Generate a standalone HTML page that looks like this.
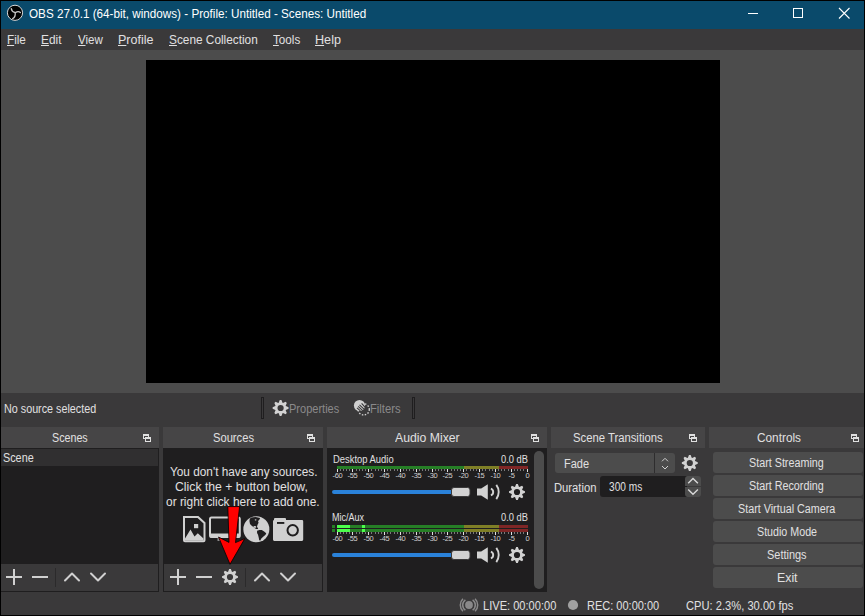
<!DOCTYPE html>
<html><head><meta charset="utf-8"><style>
*{box-sizing:border-box;margin:0;padding:0}
html,body{width:865px;height:616px;overflow:hidden;background:#3a393a}
body{position:relative;font-family:"Liberation Sans",sans-serif}
.a{position:absolute}
.t{position:absolute;white-space:pre;transform-origin:0 0}
u{text-decoration:underline;text-underline-offset:1px;text-decoration-thickness:1px}
svg{position:absolute;overflow:visible}
.lab{position:absolute;width:30px;text-align:center;font-size:7.5px;line-height:8px;color:#d0d0d0;letter-spacing:-0.3px}
</style></head><body>
<!-- window border -->
<div class="a" style="left:0;top:0;width:865px;height:616px;background:#000"></div>
<!-- title bar -->
<div class="a" style="left:1px;top:1px;width:863px;height:28px;background:#0a4a6b"></div>
<!-- menu bar -->
<div class="a" style="left:1px;top:29px;width:863px;height:21px;background:#3a393a"></div>
<!-- preview -->
<div class="a" style="left:1px;top:50px;width:863px;height:343px;background:#4c4c4c"></div>
<div class="a" style="left:146px;top:60px;width:574px;height:323px;background:#000"></div>
<!-- context bar + docks area + status -->
<div class="a" style="left:1px;top:393px;width:863px;height:222px;background:#3a393a"></div>

<!-- dock titles -->
<div class="a" style="left:1px;top:427px;width:158px;height:21px;background:#464546"></div>
<div class="a" style="left:163px;top:427px;width:160px;height:21px;background:#464546"></div>
<div class="a" style="left:327px;top:427px;width:220px;height:21px;background:#464546"></div>
<div class="a" style="left:551px;top:427px;width:154px;height:21px;background:#464546"></div>
<div class="a" style="left:709px;top:427px;width:155px;height:21px;background:#464546"></div>

<!-- Scenes dock content -->
<div class="a" style="left:1px;top:448px;width:158px;height:144px;background:#1f1e1f"></div>
<div class="a" style="left:1px;top:449px;width:157px;height:17px;background:#302f30"></div>
<div class="a" style="left:1px;top:564px;width:157px;height:27px;background:#3a393a"></div>
<!-- Sources dock content -->
<div class="a" style="left:163px;top:448px;width:160px;height:144px;background:#1f1e1f"></div>
<div class="a" style="left:164px;top:564px;width:158px;height:27px;background:#3a393a"></div>
<!-- Mixer -->
<div class="a" style="left:327px;top:448px;width:220px;height:144px;background:#1f1e1f"></div>
<div class="a" style="left:534px;top:451px;width:10px;height:138px;background:#4c4c4c;border-radius:5px"></div>

<!-- Transitions -->
<div class="a" style="left:555px;top:453px;width:120px;height:20px;background:#4c4c4c;border-radius:3px"></div>
<div class="a" style="left:654px;top:453px;width:1px;height:20px;background:#2e2d2e"></div>
<div class="a" style="left:600px;top:476px;width:87px;height:21px;background:#1f1e1f;border-radius:3px 0 0 3px"></div>
<div class="a" style="left:685px;top:476px;width:16px;height:10px;background:#4c4c4c;border-radius:3px 3px 0 0"></div>
<div class="a" style="left:685px;top:487px;width:16px;height:10px;background:#4c4c4c;border-radius:0 0 3px 3px"></div>

<!-- Controls buttons -->
<div class="a" style="left:713px;top:452px;width:150px;height:21px;background:#4c4c4c;border-radius:3px"></div>
<div class="a" style="left:713px;top:475px;width:150px;height:21px;background:#4c4c4c;border-radius:3px"></div>
<div class="a" style="left:713px;top:498px;width:150px;height:21px;background:#4c4c4c;border-radius:3px"></div>
<div class="a" style="left:713px;top:521px;width:150px;height:21px;background:#4c4c4c;border-radius:3px"></div>
<div class="a" style="left:713px;top:544px;width:150px;height:21px;background:#4c4c4c;border-radius:3px"></div>
<div class="a" style="left:713px;top:567px;width:150px;height:21px;background:#4c4c4c;border-radius:3px"></div>

<!-- status bar bottom border -->
<div class="a" style="left:0;top:615px;width:865px;height:1px;background:#000"></div>

<svg width="865" height="616" viewBox="0 0 865 616" style="left:0;top:0">
<defs>
  <g id="gear">
    <path fill="#d2d2d2" fill-rule="evenodd" d="M-1.92,-5.26 L-0.84,-7.96 L0.84,-7.96 L1.92,-5.26 L2.37,-5.08 L5.03,-6.22 L6.22,-5.03 L5.08,-2.37 L5.26,-1.92 L7.96,-0.84 L7.96,0.84 L5.26,1.92 L5.08,2.37 L6.22,5.03 L5.03,6.22 L2.37,5.08 L1.92,5.26 L0.84,7.96 L-0.84,7.96 L-1.92,5.26 L-2.37,5.08 L-5.03,6.22 L-6.22,5.03 L-5.08,2.37 L-5.26,1.92 L-7.96,0.84 L-7.96,-0.84 L-5.26,-1.92 L-5.08,-2.37 L-6.22,-5.03 L-5.03,-6.22 L-2.37,-5.08 Z M0,-3.1 A3.1,3.1 0 1,0 0,3.1 A3.1,3.1 0 1,0 0,-3.1 Z"/>
  </g>
  <g id="undock" fill="none" stroke="#e0e0e0" stroke-width="1">
    <rect x="0.5" y="0.5" width="5" height="4"/>
    <path d="M0,1.5 h6"/>
    <rect x="2.5" y="3.5" width="5" height="4" fill="#464546"/>
    <path d="M2,4.5 h6"/>
  </g>
  <g id="spk" fill="#d2d2d2">
    <path d="M0,4.3 h4.2 L10.8,0 V15.6 L4.2,11.3 H0 Z"/>
    <path d="M13.9,4.4 A3.66,3.66 0 0,1 13.9,11.2" fill="none" stroke="#d2d2d2" stroke-width="1.9"/>
    <path d="M19.3,0.7 A11.7,11.7 0 0,1 19.3,14.9" fill="none" stroke="#d2d2d2" stroke-width="1.9"/>
  </g>
</defs>

<!-- OBS logo -->
<circle cx="15" cy="12.8" r="7.6" fill="#000" stroke="#d8d8d8" stroke-width="1"/>
<g fill="none" stroke="#c8c8c8" stroke-width="1.3" stroke-linecap="round">
  <path d="M11.3,8.6 Q11.6,11.6 14.8,12.4"/>
  <path d="M20.4,12.6 Q18.2,10.6 15.4,12.6"/>
  <path d="M12.6,18.6 Q15.6,17.2 15.2,13"/>
</g>
<!-- window controls -->
<path d="M748,13.5 h10" stroke="#fff" stroke-width="1"/>
<rect x="793.5" y="8.5" width="9" height="9" fill="none" stroke="#fff" stroke-width="1"/>
<path d="M839,8 L849.5,18.5 M849.5,8 L839,18.5" stroke="#fff" stroke-width="1.1"/>
<!-- menu underlines handled by text -->

<!-- context bar separators -->
<rect x="261.5" y="397.5" width="2" height="21" fill="none" stroke="#1f1e1f" stroke-width="1"/>
<rect x="412.5" y="397.5" width="2" height="21" fill="none" stroke="#1f1e1f" stroke-width="1"/>
<use href="#gear" transform="translate(280.6,408)"/>
<!-- filters icon -->
<g>
  <circle cx="359.5" cy="405.5" r="5.6" fill="#d0d0d0"/>
  <circle cx="363.7" cy="409.4" r="5.6" fill="none" stroke="#d0d0d0" stroke-width="1.4" stroke-dasharray="1.5 1.5"/>
  <g stroke="#3a393a" stroke-width="1.1" fill="none">
    <path d="M361.6,403.3 L365.2,407.4 M359.5,404.9 L364,409.2 M358.2,406.4 L362.7,410.6 M357,407.8 L360.4,410.9"/>
  </g>
</g>

<!-- undock icons -->
<use href="#undock" transform="translate(143,434)"/>
<use href="#undock" transform="translate(307,434)"/>
<use href="#undock" transform="translate(531,434)"/>
<use href="#undock" transform="translate(689,434)"/>
<use href="#undock" transform="translate(851,434)"/>

<!-- scenes toolbar -->
<g stroke="#d0d0d0" stroke-width="2" fill="none">
  <path d="M6,577 h16 M14,569 v16"/>
  <path d="M32,577 h16"/>
  <path d="M65,580.5 L72,573.5 L79,580.5" stroke-linecap="round" stroke-linejoin="round"/>
  <path d="M91,573.5 L98,580.5 L105,573.5" stroke-linecap="round" stroke-linejoin="round"/>
  <path d="M170,577 h16 M178,569 v16"/>
  <path d="M196,577 h16"/>
  <path d="M255,580.5 L262,573.5 L269,580.5" stroke-linecap="round" stroke-linejoin="round"/>
  <path d="M281,573.5 L288,580.5 L295,573.5" stroke-linecap="round" stroke-linejoin="round"/>
</g>
<path d="M55.5,568 v19 M245.5,568 v19" stroke="#2b2a2b" stroke-width="1"/>
<use href="#gear" transform="translate(230,577)"/>
<!-- toolbar frame borders -->
<path d="M158.5,448 V591.5 H1" fill="none" stroke="#1f1e1f" stroke-width="1"/>
<rect x="163.5" y="448.5" width="159" height="143" fill="none" stroke="#1f1e1f" stroke-width="1"/>

<!-- source icons -->
<g>
  <path d="M184,517 H198 L204.5,523 V540.3 Q204.5,541.3 203.5,541.3 H185 Q184,541.3 184,540.3 Z" fill="none" stroke="#d0d0d0" stroke-width="2"/>
  <rect x="194" y="524" width="4.2" height="4.2" fill="#d0d0d0"/>
  <path d="M185,538.5 L190.5,529.5 L194.5,536.5 L197.8,533.2 L203.5,538.5 V540.5 H185 Z" fill="#d0d0d0"/>
</g>
<g>
  <rect x="210" y="517.4" width="29.8" height="19.6" rx="1.5" fill="none" stroke="#d0d0d0" stroke-width="2"/>
  <rect x="210" y="533.5" width="29.8" height="4" fill="#d0d0d0"/>
  <path d="M217.5,538 h2.5 v3 h-2.5 z" fill="#8a8a8a"/>
</g>
<g>
  <circle cx="256.35" cy="529.25" r="13" fill="#d0d0d0"/>
  <path d="M249.77,518.77 L251.42,517.59 L255.65,516.98 L260.13,517.92 L259.18,519.94 L258.0,521.12 L258.57,522.77 L257.54,524.65 L256.97,526.77 L258.24,528.65 L257.54,529.12 L256.12,529.12 L254.95,528.18 L253.3,527.0 L251.42,525.59 L250.0,523.95 L249.44,521.12 Z" fill="#1f1e1f"/>
  <ellipse cx="254.8" cy="526.9" rx="1.5" ry="0.9" fill="#d0d0d0"/>
  <circle cx="255.6" cy="519.8" r="0.9" fill="#9a9a9a"/>
  <path d="M257.07,530.77 L259.42,529.97 L261.77,530.07 L264.13,531.48 L266.25,533.13 L265.54,534.77 L263.19,536.66 L261.3,538.54 L260.13,540.66 L259.18,539.95 L258.71,537.6 L258.01,534.77 L257.07,532.89 Z" fill="#1f1e1f"/>
</g>
<g>
  <path d="M275,518 H285 Q286,518 286,519 V520 H302 Q303.2,520 303.2,521.2 V539.6 Q303.2,540.9 302,540.9 H274.2 Q273,540.9 273,539.6 V521.2 Q273,520 274.2,520 H274 V519 Q274,518 275,518 Z" fill="#d0d0d0"/>
  <rect x="277" y="522" width="7.3" height="1.9" fill="#1f1e1f"/>
  <circle cx="292.7" cy="530.3" r="5.2" fill="none" stroke="#1f1e1f" stroke-width="2"/>
</g>
<!-- red arrow -->
<path d="M227.8,506.6 L239.6,506.6 L235.5,542.6 L244.8,538.6 L230,564.3 L218.5,537 L229,542.4 Z" fill="#ff0000" stroke="#000" stroke-width="0.8" stroke-linejoin="miter"/>

<!-- mixer: meters -->
<g id="meters">
  <rect x="337" y="466" width="127" height="3" fill="#267f26"/>
  <rect x="464" y="466" width="35" height="3" fill="#7f7f26"/>
  <rect x="499" y="466" width="29" height="3" fill="#7f2626"/>

  <rect x="337" y="525" width="127" height="3" fill="#267f26"/>
  <rect x="464" y="525" width="35" height="3" fill="#7f7f26"/>
  <rect x="499" y="525" width="29" height="3" fill="#7f2626"/>
  <rect x="337" y="529" width="127" height="3" fill="#267f26"/>
  <rect x="464" y="529" width="35" height="3" fill="#7f7f26"/>
  <rect x="499" y="529" width="29" height="3" fill="#7f2626"/>
  <rect x="337" y="525" width="13" height="3" fill="#4cff4c"/>
  <rect x="337" y="529" width="13" height="3" fill="#4cff4c"/>
  <rect x="362" y="525" width="3" height="3" fill="#4cff4c"/>
  <rect x="362" y="529" width="3" height="3" fill="#4cff4c"/>
  <rect x="332" y="525" width="3" height="3" fill="#267f26"/>
  <rect x="332" y="529" width="3" height="3" fill="#267f26"/>
</g>
<g id="ticks1"><rect x="337" y="469" width="1" height="3" fill="#e1e0e1"/><rect x="340" y="469" width="1" height="2" fill="#7a797a"/><rect x="343" y="469" width="1" height="2" fill="#7a797a"/><rect x="346" y="469" width="1" height="2" fill="#7a797a"/><rect x="349" y="469" width="1" height="2" fill="#7a797a"/><rect x="352" y="469" width="1" height="3" fill="#e1e0e1"/><rect x="356" y="469" width="1" height="2" fill="#7a797a"/><rect x="359" y="469" width="1" height="2" fill="#7a797a"/><rect x="362" y="469" width="1" height="2" fill="#7a797a"/><rect x="365" y="469" width="1" height="2" fill="#7a797a"/><rect x="368" y="469" width="1" height="3" fill="#e1e0e1"/><rect x="371" y="469" width="1" height="2" fill="#7a797a"/><rect x="375" y="469" width="1" height="2" fill="#7a797a"/><rect x="378" y="469" width="1" height="2" fill="#7a797a"/><rect x="381" y="469" width="1" height="2" fill="#7a797a"/><rect x="384" y="469" width="1" height="3" fill="#e1e0e1"/><rect x="387" y="469" width="1" height="2" fill="#7a797a"/><rect x="390" y="469" width="1" height="2" fill="#7a797a"/><rect x="394" y="469" width="1" height="2" fill="#7a797a"/><rect x="397" y="469" width="1" height="2" fill="#7a797a"/><rect x="400" y="469" width="1" height="3" fill="#e1e0e1"/><rect x="403" y="469" width="1" height="2" fill="#7a797a"/><rect x="406" y="469" width="1" height="2" fill="#7a797a"/><rect x="409" y="469" width="1" height="2" fill="#7a797a"/><rect x="413" y="469" width="1" height="2" fill="#7a797a"/><rect x="416" y="469" width="1" height="3" fill="#e1e0e1"/><rect x="419" y="469" width="1" height="2" fill="#7a797a"/><rect x="422" y="469" width="1" height="2" fill="#7a797a"/><rect x="425" y="469" width="1" height="2" fill="#7a797a"/><rect x="428" y="469" width="1" height="2" fill="#7a797a"/><rect x="432" y="469" width="1" height="3" fill="#e1e0e1"/><rect x="435" y="469" width="1" height="2" fill="#7a797a"/><rect x="438" y="469" width="1" height="2" fill="#7a797a"/><rect x="441" y="469" width="1" height="2" fill="#7a797a"/><rect x="444" y="469" width="1" height="2" fill="#7a797a"/><rect x="447" y="469" width="1" height="3" fill="#e1e0e1"/><rect x="451" y="469" width="1" height="2" fill="#7a797a"/><rect x="454" y="469" width="1" height="2" fill="#7a797a"/><rect x="457" y="469" width="1" height="2" fill="#7a797a"/><rect x="460" y="469" width="1" height="2" fill="#7a797a"/><rect x="463" y="469" width="1" height="3" fill="#e1e0e1"/><rect x="466" y="469" width="1" height="2" fill="#7a797a"/><rect x="470" y="469" width="1" height="2" fill="#7a797a"/><rect x="473" y="469" width="1" height="2" fill="#7a797a"/><rect x="476" y="469" width="1" height="2" fill="#7a797a"/><rect x="479" y="469" width="1" height="3" fill="#e1e0e1"/><rect x="482" y="469" width="1" height="2" fill="#7a797a"/><rect x="485" y="469" width="1" height="2" fill="#7a797a"/><rect x="489" y="469" width="1" height="2" fill="#7a797a"/><rect x="492" y="469" width="1" height="2" fill="#7a797a"/><rect x="495" y="469" width="1" height="3" fill="#e1e0e1"/><rect x="498" y="469" width="1" height="2" fill="#7a797a"/><rect x="501" y="469" width="1" height="2" fill="#7a797a"/><rect x="504" y="469" width="1" height="2" fill="#7a797a"/><rect x="508" y="469" width="1" height="2" fill="#7a797a"/><rect x="511" y="469" width="1" height="3" fill="#e1e0e1"/><rect x="514" y="469" width="1" height="2" fill="#7a797a"/><rect x="517" y="469" width="1" height="2" fill="#7a797a"/><rect x="520" y="469" width="1" height="2" fill="#7a797a"/><rect x="523" y="469" width="1" height="2" fill="#7a797a"/><rect x="527" y="469" width="1" height="3" fill="#e1e0e1"/></g>
<g id="ticks2"><rect x="337" y="532" width="1" height="3" fill="#e1e0e1"/><rect x="340" y="532" width="1" height="2" fill="#7a797a"/><rect x="343" y="532" width="1" height="2" fill="#7a797a"/><rect x="346" y="532" width="1" height="2" fill="#7a797a"/><rect x="349" y="532" width="1" height="2" fill="#7a797a"/><rect x="352" y="532" width="1" height="3" fill="#e1e0e1"/><rect x="356" y="532" width="1" height="2" fill="#7a797a"/><rect x="359" y="532" width="1" height="2" fill="#7a797a"/><rect x="362" y="532" width="1" height="2" fill="#7a797a"/><rect x="365" y="532" width="1" height="2" fill="#7a797a"/><rect x="368" y="532" width="1" height="3" fill="#e1e0e1"/><rect x="371" y="532" width="1" height="2" fill="#7a797a"/><rect x="375" y="532" width="1" height="2" fill="#7a797a"/><rect x="378" y="532" width="1" height="2" fill="#7a797a"/><rect x="381" y="532" width="1" height="2" fill="#7a797a"/><rect x="384" y="532" width="1" height="3" fill="#e1e0e1"/><rect x="387" y="532" width="1" height="2" fill="#7a797a"/><rect x="390" y="532" width="1" height="2" fill="#7a797a"/><rect x="394" y="532" width="1" height="2" fill="#7a797a"/><rect x="397" y="532" width="1" height="2" fill="#7a797a"/><rect x="400" y="532" width="1" height="3" fill="#e1e0e1"/><rect x="403" y="532" width="1" height="2" fill="#7a797a"/><rect x="406" y="532" width="1" height="2" fill="#7a797a"/><rect x="409" y="532" width="1" height="2" fill="#7a797a"/><rect x="413" y="532" width="1" height="2" fill="#7a797a"/><rect x="416" y="532" width="1" height="3" fill="#e1e0e1"/><rect x="419" y="532" width="1" height="2" fill="#7a797a"/><rect x="422" y="532" width="1" height="2" fill="#7a797a"/><rect x="425" y="532" width="1" height="2" fill="#7a797a"/><rect x="428" y="532" width="1" height="2" fill="#7a797a"/><rect x="432" y="532" width="1" height="3" fill="#e1e0e1"/><rect x="435" y="532" width="1" height="2" fill="#7a797a"/><rect x="438" y="532" width="1" height="2" fill="#7a797a"/><rect x="441" y="532" width="1" height="2" fill="#7a797a"/><rect x="444" y="532" width="1" height="2" fill="#7a797a"/><rect x="447" y="532" width="1" height="3" fill="#e1e0e1"/><rect x="451" y="532" width="1" height="2" fill="#7a797a"/><rect x="454" y="532" width="1" height="2" fill="#7a797a"/><rect x="457" y="532" width="1" height="2" fill="#7a797a"/><rect x="460" y="532" width="1" height="2" fill="#7a797a"/><rect x="463" y="532" width="1" height="3" fill="#e1e0e1"/><rect x="466" y="532" width="1" height="2" fill="#7a797a"/><rect x="470" y="532" width="1" height="2" fill="#7a797a"/><rect x="473" y="532" width="1" height="2" fill="#7a797a"/><rect x="476" y="532" width="1" height="2" fill="#7a797a"/><rect x="479" y="532" width="1" height="3" fill="#e1e0e1"/><rect x="482" y="532" width="1" height="2" fill="#7a797a"/><rect x="485" y="532" width="1" height="2" fill="#7a797a"/><rect x="489" y="532" width="1" height="2" fill="#7a797a"/><rect x="492" y="532" width="1" height="2" fill="#7a797a"/><rect x="495" y="532" width="1" height="3" fill="#e1e0e1"/><rect x="498" y="532" width="1" height="2" fill="#7a797a"/><rect x="501" y="532" width="1" height="2" fill="#7a797a"/><rect x="504" y="532" width="1" height="2" fill="#7a797a"/><rect x="508" y="532" width="1" height="2" fill="#7a797a"/><rect x="511" y="532" width="1" height="3" fill="#e1e0e1"/><rect x="514" y="532" width="1" height="2" fill="#7a797a"/><rect x="517" y="532" width="1" height="2" fill="#7a797a"/><rect x="520" y="532" width="1" height="2" fill="#7a797a"/><rect x="523" y="532" width="1" height="2" fill="#7a797a"/><rect x="527" y="532" width="1" height="3" fill="#e1e0e1"/></g>

<!-- sliders -->
<rect x="332" y="490" width="124" height="4" rx="2" fill="#2a82da"/>
<rect x="451.5" y="487.5" width="18.5" height="9" rx="2.5" fill="#d2d2d2" stroke="#3a393a" stroke-width="1"/>
<use href="#spk" transform="translate(477,484.2)"/>
<use href="#gear" transform="translate(517,492)"/>
<rect x="332" y="553" width="124" height="4" rx="2" fill="#2a82da"/>
<rect x="451.5" y="550.5" width="18.5" height="9" rx="2.5" fill="#d2d2d2" stroke="#3a393a" stroke-width="1"/>
<use href="#spk" transform="translate(477,547.2)"/>
<use href="#gear" transform="translate(517,555)"/>

<!-- transitions -->
<g stroke="#d0d0d0" stroke-width="1" fill="none">
  <path d="M662,461.3 L665,458.3 L668,461.3"/>
  <path d="M662,466 L665,469 L668,466"/>
</g>
<use href="#gear" transform="translate(689.8,463)"/>
<g stroke="#d8d8d8" stroke-width="1.4" fill="none">
  <path d="M688.2,483.3 L693,478.4 L697.9,483.3"/>
  <path d="M688.2,489.4 L693,494.3 L697.9,489.4"/>
</g>

<!-- status -->
<g fill="none" stroke="#8a898a" stroke-width="1.5">
  <path d="M465.4,599.8 A6.35,6.35 0 0,0 465.4,610.2"/>
  <path d="M472.6,599.8 A6.35,6.35 0 0,1 472.6,610.2"/>
  <path d="M462.96,598.74 A8.7,8.7 0 0,0 462.96,611.26"/>
  <path d="M475.04,598.74 A8.7,8.7 0 0,1 475.04,611.26"/>
</g>
<circle cx="469" cy="605" r="3.9" fill="#8a898a"/>
<circle cx="573" cy="605" r="5.1" fill="#a0a0a0"/>
</svg>
<div class="lab" style="left:322.5px;top:472px">-60</div><div class="lab" style="left:337.5px;top:472px">-55</div><div class="lab" style="left:353.5px;top:472px">-50</div><div class="lab" style="left:369.5px;top:472px">-45</div><div class="lab" style="left:385.5px;top:472px">-40</div><div class="lab" style="left:401.5px;top:472px">-35</div><div class="lab" style="left:417.5px;top:472px">-30</div><div class="lab" style="left:432.5px;top:472px">-25</div><div class="lab" style="left:448.5px;top:472px">-20</div><div class="lab" style="left:464.5px;top:472px">-15</div><div class="lab" style="left:480.5px;top:472px">-10</div><div class="lab" style="left:496.5px;top:472px">-5</div><div class="lab" style="left:512.5px;top:472px">0</div><div class="lab" style="left:322.5px;top:535px">-60</div><div class="lab" style="left:337.5px;top:535px">-55</div><div class="lab" style="left:353.5px;top:535px">-50</div><div class="lab" style="left:369.5px;top:535px">-45</div><div class="lab" style="left:385.5px;top:535px">-40</div><div class="lab" style="left:401.5px;top:535px">-35</div><div class="lab" style="left:417.5px;top:535px">-30</div><div class="lab" style="left:432.5px;top:535px">-25</div><div class="lab" style="left:448.5px;top:535px">-20</div><div class="lab" style="left:464.5px;top:535px">-15</div><div class="lab" style="left:480.5px;top:535px">-10</div><div class="lab" style="left:496.5px;top:535px">-5</div><div class="lab" style="left:512.5px;top:535px">0</div>
<div id="title" class="t" style="left:28.80px;top:7.04px;font-size:12px;line-height:15px;color:#ffffff;transform:scaleX(0.974);letter-spacing:0px">OBS 27.0.1 (64-bit, windows) - Profile: Untitled - Scenes: Untitled</div>
<div id="m_file" class="t" style="left:7.00px;top:32.54px;font-size:12px;line-height:15px;color:#e1e0e1;transform:scaleX(0.9761);letter-spacing:0px"><u>F</u>ile</div>
<div id="m_edit" class="t" style="left:40.80px;top:32.54px;font-size:12px;line-height:15px;color:#e1e0e1;transform:scaleX(0.9907);letter-spacing:0px"><u>E</u>dit</div>
<div id="m_view" class="t" style="left:78.00px;top:32.54px;font-size:12px;line-height:15px;color:#e1e0e1;transform:scaleX(0.9615);letter-spacing:0px"><u>V</u>iew</div>
<div id="m_prof" class="t" style="left:117.80px;top:32.54px;font-size:12px;line-height:15px;color:#e1e0e1;transform:scaleX(1.0429);letter-spacing:0px"><u>P</u>rofile</div>
<div id="m_sc" class="t" style="left:169.40px;top:32.54px;font-size:12px;line-height:15px;color:#e1e0e1;transform:scaleX(0.9857);letter-spacing:0px"><u>S</u>cene Collection</div>
<div id="m_tools" class="t" style="left:272.60px;top:32.54px;font-size:12px;line-height:15px;color:#e1e0e1;transform:scaleX(0.9718);letter-spacing:0px"><u>T</u>ools</div>
<div id="m_help" class="t" style="left:315.20px;top:32.54px;font-size:12px;line-height:15px;color:#e1e0e1;transform:scaleX(1.0508);letter-spacing:0px"><u>H</u>elp</div>
<div id="nosrc" class="t" style="left:3.80px;top:401.74px;font-size:12px;line-height:15px;color:#e1e0e1;transform:scaleX(0.8972);letter-spacing:0px">No source selected</div>
<div id="props" class="t" style="left:289.40px;top:402.44px;font-size:12px;line-height:15px;color:#8a898a;transform:scaleX(0.9188);letter-spacing:0px">Properties</div>
<div id="filters" class="t" style="left:370.00px;top:402.44px;font-size:12px;line-height:15px;color:#8a898a;transform:scaleX(0.9355);letter-spacing:0px">Filters</div>
<div id="d_scenes" class="t" style="left:51.60px;top:431.44px;font-size:12px;line-height:15px;color:#e1e0e1;transform:scaleX(0.8927);letter-spacing:0px">Scenes</div>
<div id="d_sources" class="t" style="left:213.00px;top:431.44px;font-size:12px;line-height:15px;color:#e1e0e1;transform:scaleX(0.9308);letter-spacing:0px">Sources</div>
<div id="d_mixer" class="t" style="left:394.80px;top:430.54px;font-size:12px;line-height:15px;color:#e1e0e1;transform:scaleX(1.0204);letter-spacing:0px">Audio Mixer</div>
<div id="d_trans" class="t" style="left:572.80px;top:431.44px;font-size:12px;line-height:15px;color:#e1e0e1;transform:scaleX(0.9406);letter-spacing:0px">Scene Transitions</div>
<div id="d_ctrl" class="t" style="left:756.80px;top:431.44px;font-size:12px;line-height:15px;color:#e1e0e1;transform:scaleX(0.9845);letter-spacing:0px">Controls</div>
<div id="scene" class="t" style="left:2.80px;top:451.34px;font-size:12px;line-height:15px;color:#e1e0e1;transform:scaleX(0.9013);letter-spacing:0px">Scene</div>
<div id="src1" class="t" style="left:169.60px;top:465.44px;font-size:12px;line-height:15px;color:#e1e0e1;transform:scaleX(0.9833);letter-spacing:0px">You don't have any sources.</div>
<div id="src2" class="t" style="left:175.20px;top:480.14px;font-size:12px;line-height:15px;color:#e1e0e1;transform:scaleX(1.0193);letter-spacing:0px">Click the + button below,</div>
<div id="src3" class="t" style="left:165.60px;top:494.94px;font-size:12px;line-height:15px;color:#e1e0e1;transform:scaleX(0.993);letter-spacing:0px">or right click here to add one.</div>
<div id="desk" class="t" style="left:332.70px;top:454.24px;font-size:10px;line-height:12px;color:#e1e0e1;transform:scaleX(0.9406);letter-spacing:0px">Desktop Audio</div>
<div id="desk_db" class="t" style="left:501.00px;top:454.24px;font-size:10px;line-height:12px;color:#e1e0e1;transform:scaleX(0.931);letter-spacing:0px">0.0 dB</div>
<div id="mic" class="t" style="left:332.40px;top:512.43px;font-size:10px;line-height:12px;color:#e1e0e1;transform:scaleX(0.9006);letter-spacing:0px">Mic/Aux</div>
<div id="mic_db" class="t" style="left:501.00px;top:512.43px;font-size:10px;line-height:12px;color:#e1e0e1;transform:scaleX(0.931);letter-spacing:0px">0.0 dB</div>
<div id="fade" class="t" style="left:563.60px;top:456.94px;font-size:12px;line-height:15px;color:#e1e0e1;transform:scaleX(0.916);letter-spacing:0px">Fade</div>
<div id="dur" class="t" style="left:554.40px;top:480.74px;font-size:12px;line-height:15px;color:#e1e0e1;transform:scaleX(0.9363);letter-spacing:0px">Duration</div>
<div id="ms" class="t" style="left:609.20px;top:480.24px;font-size:12px;line-height:15px;color:#e1e0e1;transform:scaleX(0.8438);letter-spacing:0px">300 ms</div>
<div id="b1" class="t" style="left:749.40px;top:456.34px;font-size:12px;line-height:15px;color:#e1e0e1;transform:scaleX(0.8964);letter-spacing:0px">Start Streaming</div>
<div id="b2" class="t" style="left:749.40px;top:479.24px;font-size:12px;line-height:15px;color:#e1e0e1;transform:scaleX(0.8964);letter-spacing:0px">Start Recording</div>
<div id="b3" class="t" style="left:738.20px;top:502.24px;font-size:12px;line-height:15px;color:#e1e0e1;transform:scaleX(0.8973);letter-spacing:0px">Start Virtual Camera</div>
<div id="b4" class="t" style="left:757.00px;top:525.24px;font-size:12px;line-height:15px;color:#e1e0e1;transform:scaleX(0.891);letter-spacing:0px">Studio Mode</div>
<div id="b5" class="t" style="left:767.20px;top:548.24px;font-size:12px;line-height:15px;color:#e1e0e1;transform:scaleX(0.9119);letter-spacing:0px">Settings</div>
<div id="b6" class="t" style="left:777.20px;top:571.24px;font-size:12px;line-height:15px;color:#e1e0e1;transform:scaleX(1.027);letter-spacing:0px">Exit</div>
<div id="live" class="t" style="left:483.00px;top:599.44px;font-size:12px;line-height:15px;color:#e1e0e1;transform:scaleX(0.9231);letter-spacing:0px">LIVE: 00:00:00</div>
<div id="rec" class="t" style="left:587.00px;top:599.44px;font-size:12px;line-height:15px;color:#e1e0e1;transform:scaleX(0.9168);letter-spacing:0px">REC: 00:00:00</div>
<div id="cpu" class="t" style="left:685.60px;top:599.44px;font-size:12px;line-height:15px;color:#e1e0e1;transform:scaleX(0.9296);letter-spacing:0px">CPU: 2.3%, 30.00 fps</div>
</body></html>
